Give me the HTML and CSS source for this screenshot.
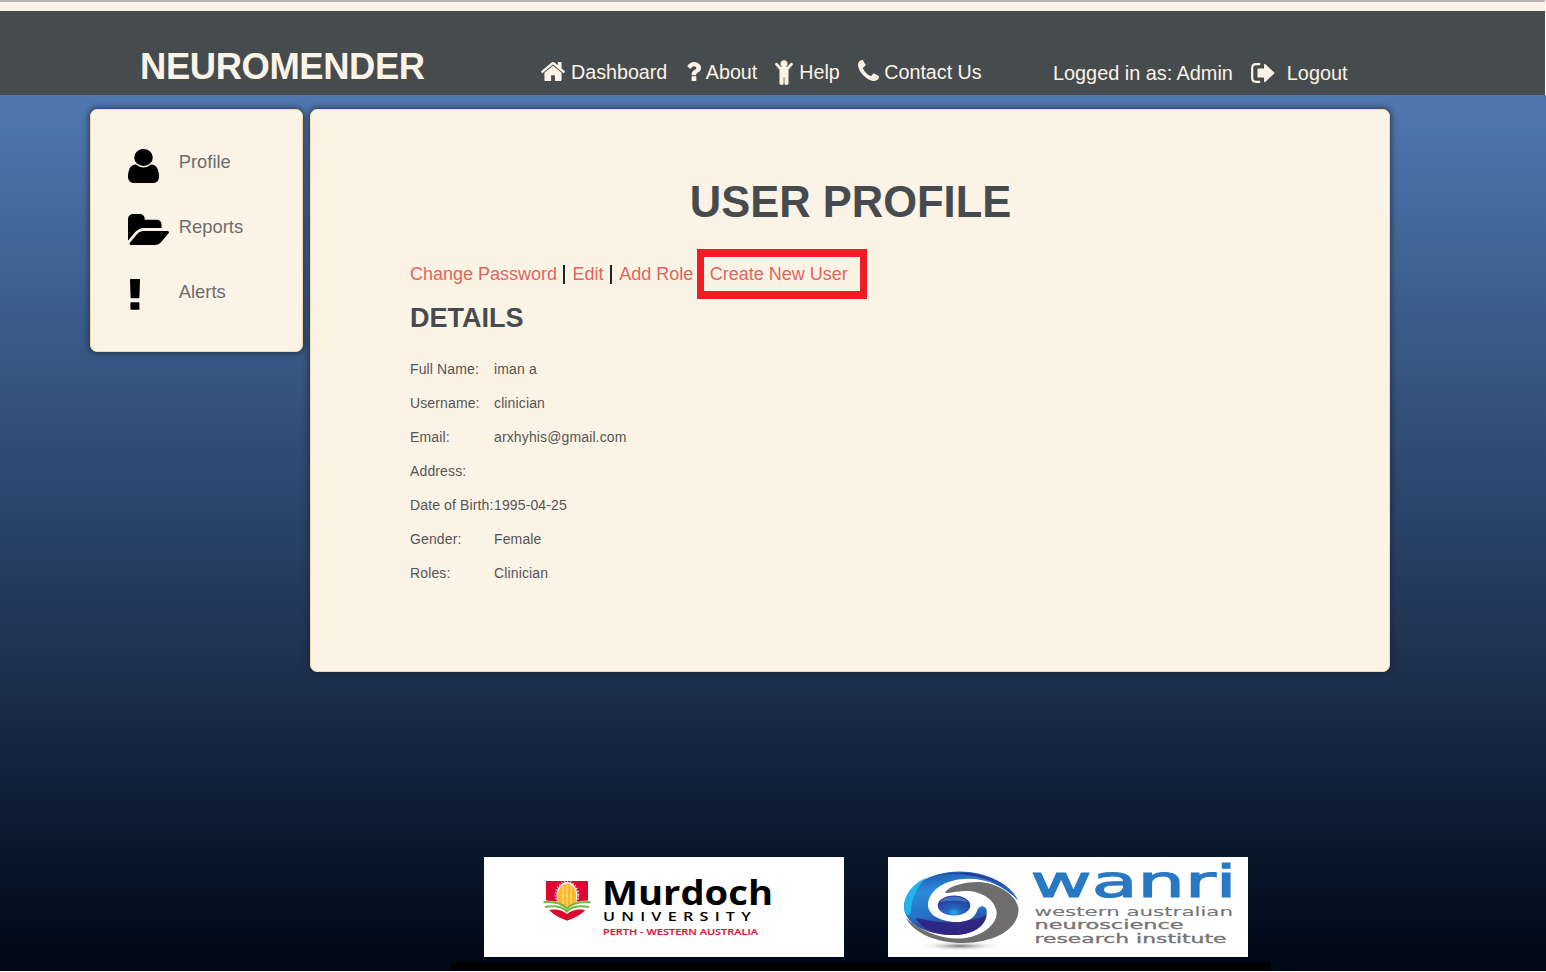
FILE: index.html
```html
<!DOCTYPE html>
<html lang="en">
<head>
<meta charset="utf-8">
<title>Neuromender - User Profile</title>
<link rel="stylesheet" href="styles.css">
</head>
<body>
<div class="page">
  <header class="header">
    <div class="brand">NEUROMENDER</div>
    <nav class="nav">
      <a class="nav-item"><svg class="icon home" viewBox="89 256 1614 1280" preserveAspectRatio="none"><path d="M1472 992v480q0 26-19 45t-45 19h-384v-384h-256v384h-384q-26 0-45-19t-19-45v-480q0-1 .5-3t.5-3l575-474 575 474q1 2 1 6zm223-69l-62 74q-8 9-21 11h-3q-13 0-21-7l-692-577-692 577q-12 8-24 7-13-2-21-11l-62-74q-8-10-7-23.5t11-21.5l719-599q32-26 76-26t76 26l244 204v-195q0-14 9-23t23-9h192q14 0 23 9t9 23v408l219 182q10 8 11 21.5t-7 23.5z"/></svg><span>Dashboard</span></a>
      <a class="nav-item"><svg class="icon question" viewBox="385 256 1019 1280" preserveAspectRatio="none"><path d="M1088 1256v240q0 16-12 28t-28 12h-240q-16 0-28-12t-12-28v-240q0-16 12-28t28-12h240q16 0 28 12t12 28zm316-600q0 54-15.5 101t-35 76.5-55 59.5-57.5 43.5-61 35.5q-41 23-68.5 65t-27.5 67q0 17-12 32.5t-28 15.5h-240q-15 0-25.5-18.5t-10.5-37.5v-45q0-83 65-156.5t143-108.500q59-27 84-56t25-76q0-42-46.5-74t-107.5-32q-65 0-108 29-35 25-107 115-13 16-31 16-12 0-25-8l-164-125q-13-10-15.500-25t5.500-28q160-266 464-266 80 0 161 31t146 83 106 127.500 41 158.500z"/></svg><span>About</span></a>
      <a class="nav-item"><svg class="icon child" viewBox="0 0 18 25"><circle cx="9" cy="3.700" r="3.500"/><path d="M2 2.800 6 6.900H12L16 2.800Q17.900 2.500 18 4.600L13.500 9.700V23.400Q13.300 25 11.500 25 9.600 25 9.400 23.400V17H8.700V23.400Q8.400 25 6.600 25 4.700 25 4.500 23.400V9.700L0 4.600Q.1 2.500 2 2.800Z"/></svg><span>Help</span></a>
      <a class="nav-item"><svg class="icon phone" viewBox="192 128 1408 1408" preserveAspectRatio="none"><path d="M1600 1240q0 27-10 70.5t-21 68.5q-21 50-122 106-94 51-186 51-27 0-52.5-3.5t-57.5-12.5-47.5-14.5-55.5-20.5-49-18q-98-35-175-83-128-79-264.5-215.5t-215.5-264.5q-48-77-83-175-3-9-18-49t-20.5-55.5-14.5-47.5-12.5-57.5-3.5-52.5q0-92 51-186 56-101 106-122 25-11 68.5-21t70.5-10q14 0 21 3 18 6 53 76 11 19 30 54t35 63.5 31 53.5q3 4 17.5 25t21.5 35.5 7 28.5q0 20-28.5 50t-62 55-62 53-28.5 46q0 9 5 22.5t8.5 20.5 14 24 11.5 19q76 137 174 235t235 174q2 1 19 11.5t24 14 20.5 8.5 22.5 5q18 0 46-28.5t53-62 55-62 50-28.5q14 0 28.5 7t35.5 21.5 25 17.5q25 15 53.5 31t63.5 35 54 30q70 35 76 53 3 7 3 21z"/></svg><span>Contact Us</span></a>
    </nav>
    <div class="session">
      <span>Logged in as: Admin</span>
      <svg class="icon signout" viewBox="0 0 24 20"><path d="M9.2 1.2H5Q1.2 1.2 1.2 5V15Q1.2 18.8 5 18.8H9.2" fill="none" stroke="#fcf3e7" stroke-width="2.2"/><path d="M6.500 5.500H13V1.600Q13.300.4 14.500 1.200L23 9.300Q23.600 10 23 10.700L14.500 18.800Q13.300 19.600 13 18.400V14.500H6.500Z"/></svg>
      <span>Logout</span>
    </div>
  </header>
  <main class="content">
    <aside class="card sidebar">
      <a class="side-item"><svg class="side-icon user" viewBox="256 128 1280 1536" preserveAspectRatio="none"><path d="M1536 1399q0 109-62.5 187t-150.5 78h-854q-88 0-150.5-78t-62.5-187q0-85 8.5-160.5t31.5-152 58.5-131 94-89 134.5-34.5q131 128 313 128t313-128q76 0 134.5 34.5t94 89 58.5 131 31.5 152 8.5 160.5zm-256-887q0 159-112.5 271.5t-271.5 112.5-271.5-112.5-112.5-271.5 112.5-271.5 271.5-112.5 271.5 112.5 112.5 271.5z"/></svg><span>Profile</span></a>
      <a class="side-item"><svg class="side-icon folder" viewBox="0 128 1879 1408" preserveAspectRatio="none"><path d="M1879 952q0 31-31 66l-336 396q-43 51-120.5 86.5t-143.5 35.5h-1088q-34 0-60.5-13t-26.5-43q0-31 31-66l336-396q43-51 120.5-86.5t143.5-35.5h1088q34 0 60.5 13t26.5 43zm-343-344v160h-832q-94 0-197 47.5t-164 119.5l-337 396-5 6q0-4-.5-12.5t-.5-12.5v-960q0-92 66-158t158-66h320q92 0 158 66t66 158v32h544q92 0 158 66t66 158z"/></svg><span>Reports</span></a>
      <a class="side-item"><svg class="side-icon alert" viewBox="0 0 10 31"><path d="M.6 0H9.4Q10 0 10 .7L9.4 18.400Q9.300 19.200 8.600 19.200H1.400Q.7 19.200.6 18.400L0 .7Q0 0 .6 0ZM1.100 23.200H8.700Q9.400 23.200 9.400 24V30.100Q9.400 30.800 8.700 30.800H1.100Q.4 30.800.4 30.100V24Q.4 23.200 1.100 23.200Z"/></svg><span>Alerts</span></a>
    </aside>
    <section class="card profile">
      <h1>USER PROFILE</h1>
      <div class="actions"><a>Change Password</a><i></i><a>Edit</a><i></i><a>Add Role</a><a class="create">Create New User</a></div>
      <h2>DETAILS</h2>
      <dl class="details">
        <dt>Full Name:</dt><dd>iman a</dd>
        <dt>Username:</dt><dd>clinician</dd>
        <dt>Email:</dt><dd>arxhyhis@gmail.com</dd>
        <dt>Address:</dt><dd></dd>
        <dt>Date of Birth:</dt><dd>1995-04-25</dd>
        <dt>Gender:</dt><dd>Female</dd>
        <dt>Roles:</dt><dd>Clinician</dd>
      </dl>
    </section>
  </main>
  <footer class="footer">
    <svg class="logo" viewBox="0 0 360 100">
      <path d="M62 24H104V46Q103 57 83 63.500Q64 57 62 46Z" fill="#dc0a32"/>
      <ellipse cx="83" cy="38.500" rx="10.500" ry="13.500" fill="#fff"/>
      <ellipse cx="83" cy="38.500" rx="11.500" ry="14" fill="none" stroke="#fff" stroke-width="1.600" stroke-dasharray="1 2"/>
      <ellipse cx="83" cy="39" rx="9.300" ry="12.300" fill="#fbb829"/>
      <path d="M79 29V49M83 27V51M87 29V49" stroke="#fbe3a8" stroke-width=".9"/>
      <path d="M59 43.500Q76 43 83 50Q90 43 107 43.500V54Q91 50 83 58Q75 50 59 54Z" fill="#fff"/>
      <path d="M74 40H92V46Q88 50 83 51.500Q78 50 74 46Z" fill="#fbb829"/>
      <path d="M79 38V47M83 38V50M87 38V47" stroke="#fbe3a8" stroke-width=".9"/>
      <path d="M59.500 45.200Q76 44 83 51.500Q90 44 106.500 45.200M61 50Q76 47.500 83 54.500Q90 47.500 105 50" fill="none" stroke="#75b943" stroke-width="2"/>
      <path d="M65.500 53Q76 51 83 57Q90 51 100.500 53Q95 58.500 83 63.500Q71 58.500 65.500 53Z" fill="#dc0a32"/>
      <text class="murdoch" x="118" y="48" textLength="171" lengthAdjust="spacingAndGlyphs">Murdoch</text>
      <text class="university" x="119" y="64" textLength="154" lengthAdjust="spacingAndGlyphs">UNIVERSITY</text>
      <text class="perth" x="119" y="77.500" textLength="155" lengthAdjust="spacingAndGlyphs">PERTH - WESTERN AUSTRALIA</text>
    </svg>
    <svg class="logo" viewBox="0 0 360 100">
      <defs>
        <linearGradient id="blue" x1=".2" y1="0" x2=".45" y2="1"><stop offset="0" stop-color="#1f55b0"/><stop offset=".3" stop-color="#2c8cd8"/><stop offset=".65" stop-color="#2472c4"/><stop offset="1" stop-color="#2d2586"/></linearGradient>
        <radialGradient id="ball" cx=".5" cy=".85" r=".75"><stop offset="0" stop-color="#22aef0"/><stop offset=".3" stop-color="#2566bf"/><stop offset="1" stop-color="#2b3797"/></radialGradient>
        <linearGradient id="rim" x1="0" x2="1"><stop offset="0" stop-color="#2d2a8c" stop-opacity="0"/><stop offset=".5" stop-color="#2d2a8c"/><stop offset="1" stop-color="#2a6cc6"/></linearGradient>
        <radialGradient id="shade"><stop offset="0" stop-color="#777"/><stop offset="1" stop-color="#fff" stop-opacity="0"/></radialGradient>
      </defs>
      <ellipse cx="72" cy="89" rx="42" ry="5" fill="url(#shade)"/>
      <path d="M57 35C62 29 76 24.500 92 25C112 27 130 39 130.500 53C130 73 105 86 75 86C48 86 26 76 18 61C34 75 55 82.500 72 81.500C95 80 109 67 108.700 55C107 41 90 33 76 34C66 34.500 57 37.500 57 35Z" fill="#706d6e"/>
      <path d="M130 43C120 26 98 14.500 72 14.500C40 15 16 30 16 50C16 66 38 78 65 78C88 78 100 67 98.700 53C97 48 91 48 89 54C86 63 76 65.500 67 65C49 64 40 56 40 48C40 35 55 23 76 22C96 20.500 115 28 130 43Z" fill="url(#blue)"/>
      <path d="M35 22C60 11 115 12 130 43C110 24 90 17 66 17C54 17 44 19 35 22Z" fill="url(#rim)"/>
      <path d="M17 56C13 40 26 25 38 21C27 32 23 44 23 55Q21 61 17 56Z" fill="#20bdf4" opacity=".85"/>
      <path d="M28 61C50 66 68 67 80 63.500Q92 62 98.500 58C97 71 82 78 65 78C46 78 32 70 28 61Z" fill="#302784"/>
      <ellipse cx="66" cy="48.500" rx="16.300" ry="10" fill="url(#ball)"/>
      <path d="M52 45Q56 39.500 66 39.500Q76 39.500 80 45Q66 42 52 45Z" fill="#58a9df" opacity=".5"/>
      <text class="wanri" x="142.500" y="39.500" textLength="206" lengthAdjust="spacingAndGlyphs">wanri</text>
      <text class="tagline light" x="146.500" y="58.500" textLength="198.500" lengthAdjust="spacingAndGlyphs">western australian</text>
      <text class="tagline" x="146.500" y="72" textLength="149" lengthAdjust="spacingAndGlyphs">neuroscience</text>
      <text class="tagline" x="146.500" y="85.500" textLength="192" lengthAdjust="spacingAndGlyphs">research institute</text>
    </svg>
  </footer>
</div>
</body>
</html>
```
FILE: styles.css
```css
* { box-sizing: border-box; }
body { margin: 0; background: #fff; font-family: "Liberation Sans", Arial, sans-serif; }
.page {
  width: 1546px; height: 971px; overflow: hidden;
  display: flex; flex-direction: column;
  background: linear-gradient(#5078b0 94px, #375682 370px, #1d304f 670px, #08162a 860px, #000917 960px);
}
.header {
  flex: none; height: 95px; margin-right: 1px;
  border-top: 2px solid #b8b3b4;
  background: linear-gradient(#fcf3e7 9px, #464b4d 9px);
  box-shadow: 1px 0 #fff;
  color: #fcf3e7; font-size: 19.700px; line-height: 24px;
  display: flex; align-items: flex-start;
  padding: 42px 0 0 140px;
}
.brand { width: 401px; padding-top: 1px; font-size: 36.400px; line-height: 44px; font-weight: bold; letter-spacing: -.4px; }
.nav { display: flex; width: 512px; padding-top: 16px; }
.nav-item { display: flex; white-space: nowrap; }
.icon { fill: #fcf3e7; flex: none; }
.home { width: 24px; height: 19px; margin: 2px 6px 0 0; }
.question { width: 15px; height: 19px; margin: 2px 5px 0 18.500px; }
.child { width: 18px; height: 25px; margin: 0 6px 0 18px; }
.phone { width: 21px; height: 21px; margin: 0 5.500px 0 18px; }
.session { display: flex; padding-top: 17px; white-space: nowrap; font-size: 19.850px; }
.signout { width: 24px; height: 20px; margin: 2px 12px 0 18px; }
.content { flex: none; display: flex; align-items: flex-start; gap: 7px; padding: 14px 0 0 90px; height: 762px; }
.card { background: #fcf3e7; border: 1px solid #f4d8ae; border-radius: 7px; box-shadow: 0 0 6px 1px rgba(25, 30, 40, .7); }
.sidebar { width: 213px; height: 243px; padding: 39px 0 0 37px; }
.side-item { height: 65px; display: grid; grid-template-columns: 50.700px auto; color: #6d6d6c; font-size: 18.400px; line-height: 26px; }
.side-icon { fill: #000; }
.user { width: 31px; height: 34px; }
.folder { width: 41px; height: 31px; }
.alert { width: 10px; height: 31px; margin-left: 2px; }
.profile { width: 1080px; height: 563px; padding: 66px 99px 0; }
h1 { margin: 0; padding-left: 1px; color: #454b4e; font-size: 43.500px; line-height: 52px; text-align: center; }
.actions { display: flex; height: 50px; margin-top: 21px; align-items: center; color: #e46459; font-size: 18px; white-space: nowrap; }
.actions i { width: 2px; height: 19px; margin: 0 7.500px 0 6px; background: #20251f; }
.create { height: 50px; width: 170px; margin-left: 4px; border: solid #ee1c25; border-width: 8px 7px; padding-left: 5.500px; line-height: 34px; }
h2 { margin: 1px 0 0; padding-top: 1px; color: #454b4e; font-size: 27px; line-height: 34px; }
.details { margin: 17px 0 0; display: grid; grid-template-columns: 84px auto; grid-auto-rows: 34px; color: #555; font-size: 14px; letter-spacing: .13px; line-height: 34px; white-space: nowrap; }
.details dd { margin: 0; }
.footer { flex: none; height: 114px; display: flex; gap: 44px; padding-left: 33px; width: 820px; margin-left: 451px; background: linear-gradient(transparent 105px, #000 105px); }
.logo { width: 360px; height: 100px; background: #fff; }
.murdoch { font: 700 33.500px "Open Sans", sans-serif; }
.university { font: 600 13px "Open Sans", sans-serif; letter-spacing: 5px; }
.perth { font: 600 9.500px "Open Sans", sans-serif; fill: #dc1640; stroke: #dc1640; stroke-width: .2px; }
.wanri { font: 44.500px "DejaVu Sans", sans-serif; fill: #2878c4; stroke: #2878c4; stroke-width: 1.200px; }
.tagline { font: 11.500px "DejaVu Sans", sans-serif; fill: #777576; stroke: #777576; stroke-width: .3px; }
.light { stroke-width: .1px; }
```
